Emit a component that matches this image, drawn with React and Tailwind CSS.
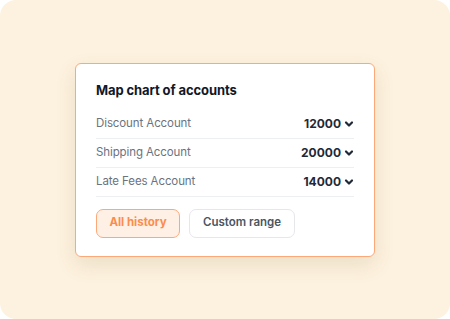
import React from "react";

const rows = [
  { name: "Discount Account", value: "12000" },
  { name: "Shipping Account", value: "20000" },
  { name: "Late Fees Account", value: "14000" },
];

const Chevron = () => (
  <svg width="10" height="10" viewBox="0 0 10 10" className="text-[#1f2937]">
    <path d="M2 3.5 L5 6.5 L8 3.5" fill="none" stroke="currentColor" strokeWidth="2.2" strokeLinecap="round" strokeLinejoin="round" />
  </svg>
);

export default function App() {
  return (
    <div className="w-[450px] h-[319px] bg-white" style={{ fontFamily: "Inter, 'Noto Sans', sans-serif" }}>
      <div className="w-full h-full rounded-[16px] bg-[#fdf2df] flex items-center justify-center">
        <div className="w-[300px] h-[194px] rounded-[6px] border-[1.5px] border-[#fca97a] bg-white pt-[16px] px-[20px] shadow-[0_8px_20px_rgba(120,90,40,0.13)]">
          <h2 className="text-[13px] font-bold text-[#111827] leading-[20px] tracking-[-0.1px]">Map chart of accounts</h2>
          <div className="mt-[10px]">
            {rows.map((r) => (
              <div key={r.name} className="flex items-center justify-between h-[29px] border-b-[1.5px] border-[#eeeff1]">
                <span className="text-[11.5px] text-[#6b7280] tracking-[-0.1px]">{r.name}</span>
                <span className="flex items-center gap-[3px] text-[12px] font-bold text-[#1f2937]">
                  {r.value}
                  <Chevron />
                </span>
              </div>
            ))}
          </div>
          <div className="flex gap-[9px] mt-[12px]">
            <button className="h-[29px] w-[84px] rounded-[7px] border-[1.5px] border-[#fca97a] bg-[#fff0e5] text-[11.5px] font-bold text-[#fb8c4e]">
              All history
            </button>
            <button className="h-[29px] w-[106px] rounded-[7px] border border-[#e5e7eb] bg-white text-[11.5px] font-semibold text-[#4b5563]">
              Custom range
            </button>
          </div>
        </div>
      </div>
    </div>
  );
}
